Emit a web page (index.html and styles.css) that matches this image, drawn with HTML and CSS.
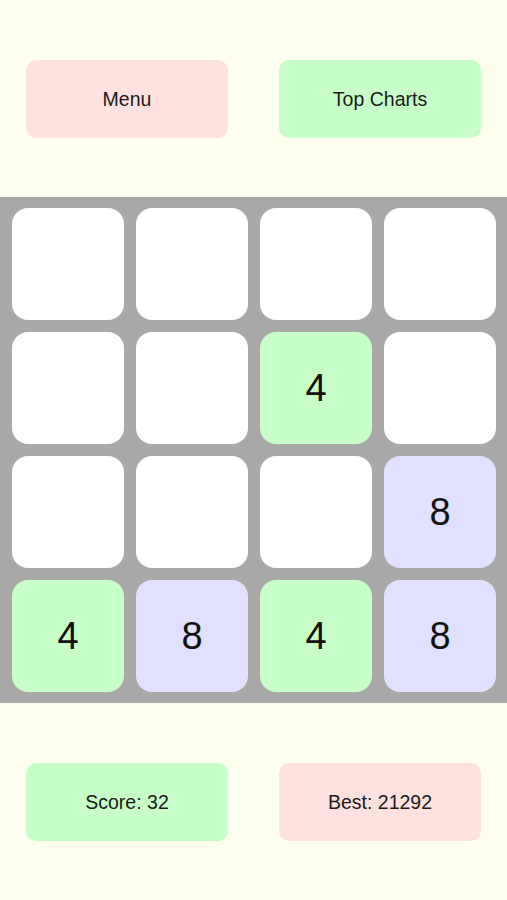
FILE: index.html
```html
<!DOCTYPE html>
<html>
<head>
<meta charset="utf-8">
<link rel="stylesheet" href="styles.css">
</head>
<body>
<div class="app">
  <div class="bar">
    <div class="btn pink">Menu</div>
    <div class="btn green">Top Charts</div>
  </div>
  <div class="board">
    <div class="tile"></div><div class="tile"></div><div class="tile"></div><div class="tile"></div>
    <div class="tile"></div><div class="tile"></div><div class="tile t4">4</div><div class="tile"></div>
    <div class="tile"></div><div class="tile"></div><div class="tile"></div><div class="tile t8">8</div>
    <div class="tile t4">4</div><div class="tile t8">8</div><div class="tile t4">4</div><div class="tile t8">8</div>
  </div>
  <div class="bar">
    <div class="btn green">Score: 32</div>
    <div class="btn pink">Best: 21292</div>
  </div>
</div>
</body>
</html>
```
FILE: styles.css
```css
html, body {
  margin: 0;
  padding: 0;
  background: #fffff0;
}
.app {
  width: 507px;
  height: 900px;
  display: flex;
  flex-direction: column;
  font-family: "Liberation Sans", Arial, sans-serif;
  color: #1a1a1a;
}
.bar {
  height: 197px;
  display: flex;
  align-items: center;
  justify-content: space-between;
  padding: 0 26px;
  box-sizing: border-box;
}
.btn {
  width: 202px;
  height: 78px;
  border-radius: 10px;
  display: flex;
  align-items: center;
  justify-content: center;
  font-size: 19.5px;
  padding-top: 2px;
  box-sizing: border-box;
}
.pink { background: #ffe2e0; }
.green { background: #c8ffc8; }
.board {
  height: 506px;
  box-sizing: border-box;
  background: #a8a8a8;
  padding: 11px 11px 11px 12px;
  display: grid;
  grid-template-columns: repeat(4, 112px);
  grid-template-rows: repeat(4, 112px);
  gap: 12px;
}
.tile {
  background: #ffffff;
  border-radius: 16px;
  display: flex;
  align-items: center;
  justify-content: center;
  font-size: 38px;
  color: #111;
}
.t4 { background: #c8ffc8; }
.t8 { background: #e1e1ff; }
```
